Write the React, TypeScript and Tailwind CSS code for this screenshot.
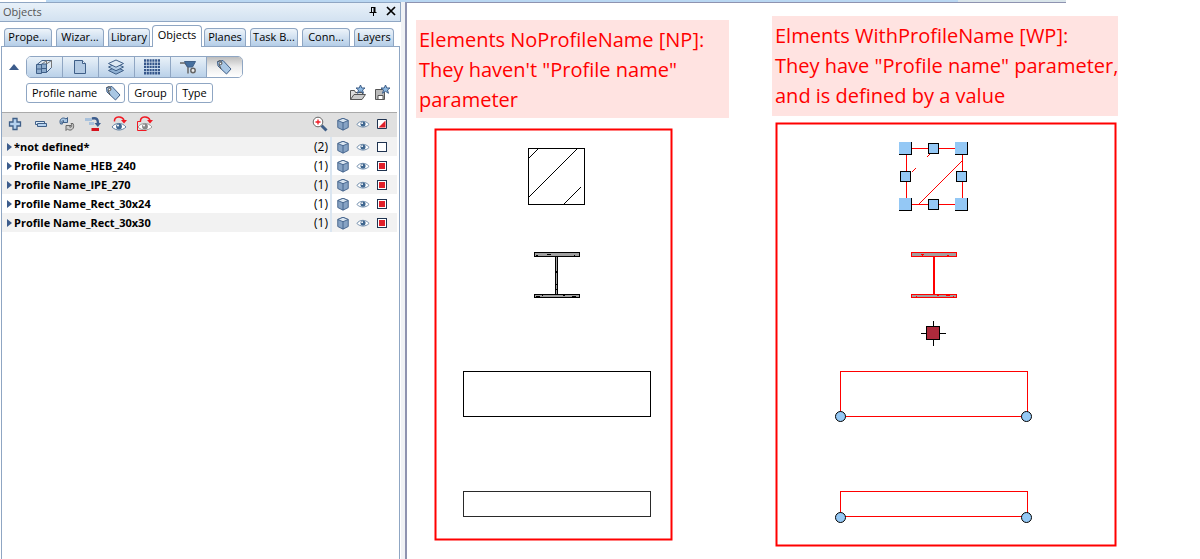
import { useState, type ReactNode } from 'react';

const tabs = [
  { label: 'Prope...', width: 'w-12' },
  { label: 'Wizar...', width: 'w-12' },
  { label: 'Library', width: 'w-[42px]' },
  { label: 'Objects', width: 'w-[50px]' },
  { label: 'Planes', width: 'w-[42px]' },
  { label: 'Task B...', width: 'w-12' },
  { label: 'Conn...', width: 'w-12' },
  { label: 'Layers', width: 'w-10' },
];

const groups = [
  { name: '*not defined*', count: 2, selected: false },
  { name: 'Profile Name_HEB_240', count: 1, selected: true },
  { name: 'Profile Name_IPE_270', count: 1, selected: true },
  { name: 'Profile Name_Rect_30x24', count: 1, selected: true },
  { name: 'Profile Name_Rect_30x30', count: 1, selected: true },
];

function Icon({ children, className = 'size-4' }: { children: ReactNode; className?: string }) {
  return (
    <svg viewBox="0 0 16 16" className={`shrink-0 ${className}`} fill="none" stroke="#3f5f88" aria-hidden="true">
      {children}
    </svg>
  );
}

function WallIcon() {
  return (
    <Icon>
      <path d="M.5 6L6 1.500h9.500v7l-5 5" fill="#dfe9f3" />
      <path d="M5.500 5.500l5-4M10.500 5l5-3.500M10.500 1.500v8M15.500 1.500v7" stroke="#777" />
      <path d="M.5 5.500h5v9h-5zM5.500 5h5v8.500h-5z" fill="#8eaccd" />
      <path d="M.5 10h5M5.500 9.500h5" />
    </Icon>
  );
}

function PageIcon() {
  return (
    <Icon>
      <path d="M2.500 1.500h8l3 3v10h-11z" fill="#b3cae3" />
      <path d="M10.500 1.500v3h3" fill="#e8f0f8" />
    </Icon>
  );
}

function LayersIcon() {
  return (
    <Icon>
      <path d="M.5 11.500l7.500-3.500 7.500 3.500L8 15.200z" fill="#8fb0d2" />
      <path d="M.5 8l7.500-3.500L15.500 8 8 11.700z" fill="#b3cde6" />
      <path d="M.5 4.500L8 1l7.500 3.500L8 8.200z" fill="#dde9f4" />
    </Icon>
  );
}

function GridIcon() {
  return (
    <Icon>
      <path
        d="M0 1.500h16M0 4.700h16M0 7.900h16M0 11.100h16M0 14.300h16"
        stroke="#34558a"
        strokeWidth="2.400"
        strokeDasharray="2.100 .680"
      />
    </Icon>
  );
}

function BarrowIcon() {
  return (
    <Icon>
      <path d="M0 4h5M5 4l3 4v6.500" stroke="#666" strokeWidth="1.500" />
      <path d="M4.500 2.500h11l-3 5.500h-5z" fill="#46709f" />
      <circle cx="13" cy="11.500" r="2.200" stroke="#666" strokeWidth="1.500" fill="#eee" />
    </Icon>
  );
}

function TagIcon() {
  return (
    <Icon>
      <path d="M1.500 2.500l5.500-1 8 8.500-4.500 5L2 7z" fill="#a9c7e4" />
      <path d="M3 5l2 5M2 3c1-3 5-1 3.500 2.500" stroke="#555" />
      <circle cx="4.500" cy="4.500" r="1.200" fill="#fff" stroke="#555" />
    </Icon>
  );
}

function FolderStarIcon() {
  return (
    <Icon>
      <path d="M.5 14.500v-9h4l1 2h7v2" fill="#ddd" stroke="#555" />
      <path d="M.5 14.500l3.500-5h11.500l-3.500 5z" fill="#ccc" stroke="#555" />
      <path d="M10.500 0l1.300 3h3.200l-2.500 2 1 3.300-3-2-3 2 1-3.300L6 3h3.200z" fill="#8fbae3" />
    </Icon>
  );
}

function SaveStarIcon() {
  return (
    <Icon>
      <path d="M.5 4.500h9v10h-9z" fill="#bbb" stroke="#555" />
      <path d="M3 10.500h5v4H3z" fill="#fff" stroke="#555" />
      <path d="M10.500 0l1.300 3h3.200l-2.500 2 1 3.300-3-2-3 2 1-3.300L6 3h3.200z" fill="#8fbae3" />
    </Icon>
  );
}

function PlusIcon() {
  return (
    <Icon>
      <path d="M6 2.500h4V6h3.500v4H10v3.500H6V10H2.500V6H6z" fill="#b5d1ee" strokeWidth="1.300" />
    </Icon>
  );
}

function MinusIcon() {
  return (
    <Icon>
      <path d="M2.500 5.500h9v3h-9z" fill="#dce9f5" />
      <path d="M4.500 7.500h9v3h-9z" fill="#b5d1ee" />
    </Icon>
  );
}

function RefreshIcon() {
  return (
    <Icon>
      <path d="M1.500 8C-.5 3 4 .5 7 3l1.500-1.500v5h-5L5 5C3.500 4 2 5.500 3.500 8z" fill="#a9c7e4" />
      <path d="M14 7.500c2.500 5-2.500 8.500-5.500 5.500L7 14.500v-5h5L10.500 11c2 1 3-1 1.500-3.500z" fill="#ccc" stroke="#666" />
    </Icon>
  );
}

function MoveIcon() {
  return (
    <Icon>
      <path d="M0 3.500h7M4 7.500h5" stroke="#a8c1dc" strokeWidth="3" />
      <path d="M7 2.500c5-1 6 1 6 5" stroke="#3c5c8c" strokeWidth="2.500" />
      <path d="M9.500 7h6.500l-3.200 4z" fill="#3c5c8c" stroke="none" />
      <path d="M6.500 12h7.500v3H6.500z" fill="#d5101c" stroke="none" />
    </Icon>
  );
}

function EyeShapes({ color = '#3f668f' }: { color?: string }) {
  return (
    <>
      <path d="M1 8.500C4 4 11 3.500 15 8.500C11 12.500 5 12.500 1 8.500z" fill="#fff" stroke={color} strokeWidth=".8" />
      <circle cx="8" cy="8" r="2.900" fill={color} stroke="none" />
      <circle cx="7" cy="7" r="1" fill="#fff" stroke="none" />
    </>
  );
}

function EyeRotateIcon({ boxed = false }: { boxed?: boolean }) {
  return (
    <Icon>
      <g transform="translate(0 2.500)">
        <EyeShapes color={boxed ? '#888' : '#3f668f'} />
      </g>
      {boxed && <path d="M4 5.500H.5v9h9" stroke="#f11923" />}
      <path d="M3.500 5.500C3 0 11-.5 13 4" stroke="#f11923" strokeWidth="1.500" />
      <path d="M10 4h6l-3 3.500z" fill="#f11923" stroke="none" />
    </Icon>
  );
}

function EyeIcon() {
  return (
    <Icon className="size-3.5">
      <EyeShapes />
    </Icon>
  );
}

function CubeIcon() {
  return (
    <Icon className="size-3.5">
      <path d="M2 4l6-2.500L14 4v8l-6 3-6-3z" fill="#87a3c4" />
      <path d="M2 4l6 2.500L14 4 8 1.500z" fill="#d9e5f0" />
      <path d="M8 6.500V15" />
    </Icon>
  );
}

function ZoomIcon() {
  return (
    <Icon>
      <path d="M9.500 9.500l5 5" strokeWidth="3" />
      <circle cx="6" cy="6" r="4.800" fill="#fff" stroke="#666" />
      <path d="M3.500 6h5M6 3.500v5" stroke="#f11923" strokeWidth="1.300" />
    </Icon>
  );
}

function HalfBoxIcon() {
  return (
    <svg viewBox="0 0 10 10" className="size-2.5" aria-hidden="true">
      <path d="M.5.500h9v9h-9z" fill="#fff" stroke="#1f3350" />
      <path d="M8.500 1.500v7h-7z" fill="#e0202a" />
    </svg>
  );
}

const filters = [
  { label: 'Structure', icon: <WallIcon /> },
  { label: 'Stories', icon: <PageIcon /> },
  { label: 'Layers', icon: <LayersIcon /> },
  { label: 'Materials', icon: <GridIcon /> },
  { label: 'Trades', icon: <BarrowIcon /> },
  { label: 'Attributes', icon: <TagIcon /> },
];

const actions = [
  { label: 'Expand all', icon: <PlusIcon /> },
  { label: 'Collapse all', icon: <MinusIcon /> },
  { label: 'Refresh', icon: <RefreshIcon /> },
  { label: 'Reassign', icon: <MoveIcon /> },
  { label: 'Invert visibility', icon: <EyeRotateIcon /> },
  { label: 'Invert selection', icon: <EyeRotateIcon boxed /> },
];

function ObjectsPanel() {
  const [active, setActive] = useState('Objects');
  const [filter, setFilter] = useState('Attributes');
  const [rows, setRows] = useState(groups);

  const toggle = (name: string) =>
    setRows(rows.map((r) => (r.name === name ? { ...r, selected: !r.selected } : r)));

  return (
    <aside className="flex w-[401px] shrink-0 flex-col text-[11px] leading-4">
      <header className="flex h-5 items-center justify-between border-y border-r border-[#8fa6c3] bg-linear-to-b from-[#e8f1f9] to-[#d3e2f1] px-[3px] text-[#555]">
        <h1>Objects</h1>
        <div className="flex gap-1.5 pb-0.5">
          <button aria-label="Pin panel">
            <svg viewBox="0 0 12 12" className="size-3" fill="none" stroke="#000" aria-hidden="true">
              <path d="M4.500 2v5M4 2.500h4M2.500 7.500h7M6.500 7v4" />
              <path d="M7.500 2v5" strokeWidth="2" />
            </svg>
          </button>
          <button aria-label="Close panel">
            <svg viewBox="0 0 12 12" className="size-3" stroke="#000" strokeWidth="1.700" aria-hidden="true">
              <path d="M2 2l8 8M10 2l-8 8" />
            </svg>
          </button>
        </div>
      </header>

      <nav className="flex h-6 items-end gap-1 pl-1" role="tablist">
        {tabs.map((tab) => (
          <button
            key={tab.label}
            role="tab"
            aria-selected={active === tab.label}
            onClick={() => setActive(tab.label)}
            className={`shrink-0 rounded-t border border-b-0 border-[#8fa6c3] text-center whitespace-nowrap text-black ${tab.width} ${
              active === tab.label
                ? 'relative -mx-0.5 -mb-px h-[22px] bg-white pb-1'
                : 'h-[18px] bg-linear-to-b from-[#eef4fa] to-[#b4cde7] pb-0.5'
            }`}
          >
            {tab.label}
          </button>
        ))}
      </nav>

      <div className="mr-px ml-px flex flex-1 flex-col border border-b-0 border-[#8fa6c3]">
        <div className="flex h-[65px] pt-[9px]">
          <button className="ml-[7px] flex h-[22px] items-center" aria-label="Collapse filters">
            <svg viewBox="0 0 10 6" className="h-1.5 w-2.5" aria-hidden="true">
              <path d="M0 6l5-6 5 6z" fill="#3c5c8c" />
            </svg>
          </button>
          <div className="ml-[7px] flex flex-1 flex-col gap-[5px]">
            <div className="flex w-[217px] overflow-hidden rounded-[5px] border border-[#8fa6c3]">
              {filters.map((f) => (
                <button
                  key={f.label}
                  aria-label={f.label}
                  aria-pressed={filter === f.label}
                  onClick={() => setFilter(f.label)}
                  className={`flex h-5 flex-1 items-center justify-center border-l border-[#8fa6c3] pr-0.5 first:border-l-0 ${
                    filter === f.label
                      ? 'bg-linear-to-b from-[#bdbdbd] via-[#ececec] to-white'
                      : 'bg-linear-to-b from-[#e9f1f8] to-[#bad1e9]'
                  }`}
                >
                  {f.icon}
                </button>
              ))}
            </div>
            <div className="flex h-5 items-center gap-[3px] pr-2 text-black">
              <button className="flex h-5 w-[99px] items-center justify-between rounded-[3px] border border-[#8fa6c3] pr-[3px] pl-[5px] whitespace-nowrap">
                Profile name
                <TagIcon />
              </button>
              <button className="h-5 w-[45px] rounded-[3px] border border-[#8fa6c3]">Group</button>
              <button className="h-5 w-[37px] rounded-[3px] border border-[#8fa6c3]">Type</button>
              <button className="mr-1.5 ml-auto" aria-label="Open favourites">
                <FolderStarIcon />
              </button>
              <button aria-label="Save favourite">
                <SaveStarIcon />
              </button>
            </div>
          </div>
        </div>

        <div className="mr-0.5 flex h-[25px] items-center border-t border-[#aaa] bg-[#e0e0e0] pr-2.5 pb-0.5 pl-[5px]">
          <div className="flex gap-2.5">
            {actions.map((a) => (
              <button key={a.label} aria-label={a.label}>
                {a.icon}
              </button>
            ))}
          </div>
          <div className="ml-auto flex items-center">
            <button className="mr-2" aria-label="Zoom to selection">
              <ZoomIcon />
            </button>
            <button className="mr-1.5" aria-label="Show in 3D">
              <CubeIcon />
            </button>
            <button className="mr-[7px]" aria-label="Show all">
              <EyeIcon />
            </button>
            <button aria-label="Select all">
              <HalfBoxIcon />
            </button>
          </div>
        </div>

        <table className="mr-0.5 border-collapse text-black">
          <tbody>
            {rows.map((row) => (
              <tr key={row.name} className="h-[19px] odd:bg-[#f2f2f2]">
                <td className="p-0 pl-[5px]">
                  <button className="flex items-center gap-0.5 font-bold whitespace-nowrap">
                    <svg viewBox="0 0 5 8" className="h-2 w-[5px]" aria-hidden="true">
                      <path d="M0 0l5 4-5 4z" fill="#3c5c8c" />
                    </svg>
                    {row.name}
                  </button>
                </td>
                <td className="w-10 border-r-2 border-[#dbe6f1] p-0 pr-0.5 text-right text-xs">({row.count})</td>
                <td className="w-[66px] p-0">
                  <div className="flex items-center pl-1">
                    <button className="mr-1.5" aria-label={`Show ${row.name} in 3D`}>
                      <CubeIcon />
                    </button>
                    <button className="mr-[7px]" aria-label={`Show ${row.name}`}>
                      <EyeIcon />
                    </button>
                    <input
                      type="checkbox"
                      aria-label={`Select ${row.name}`}
                      checked={row.selected}
                      onChange={() => toggle(row.name)}
                      className="size-2.5 appearance-none border border-[#1f3350] bg-white checked:bg-[#e0202a] checked:shadow-[inset_0_0_0_1px_white]"
                    />
                  </div>
                </td>
              </tr>
            ))}
          </tbody>
        </table>
      </div>
    </aside>
  );
}

function Frame1Drawing() {
  return (
    <svg viewBox="434 128 239 413" className="ml-[18px] h-[413px] w-[239px]" fill="none" stroke="#000">
      <rect x="435.500" y="129.500" width="236" height="410" stroke="#ff0000" strokeWidth="2" />
      <g shapeRendering="crispEdges">
        <rect x="528.500" y="148.500" width="56" height="56" />
        <path d="M528.500 158.500l10-10M528.500 197.500l49-49M563.500 204.500l17-17" />
        <path d="M534.500 252.500h45v4h-45zM534.500 294.500h45v3h-45zM555.500 256.500h2v38h-2z" fill="#a0a0a0" />
        <path d="M547 254.500h4M536 255.500h2M574 255.500h1M536 296.500h4M542 295.500h1M563 295.500h2M572 296.500h4M556.500 271v2M556.500 284v1M556.500 289v1" />
        <rect x="463.500" y="371.500" width="187" height="45" />
        <rect x="463.500" y="491.500" width="187" height="25" stroke="#2a2a2a" />
      </g>
    </svg>
  );
}

const cornerHandles = [[899, 142], [955, 142], [899, 198], [955, 198]];
const sideHandles = [[928, 143], [900, 171], [956, 171], [928, 199]];
const nodeHandles = [[840.5, 416.5], [1026.5, 416.5], [840.5, 517.5], [1026.5, 517.5]];

function Frame2Drawing() {
  return (
    <svg viewBox="775 122 342 425" className="ml-[3px] h-[425px] w-[342px]" fill="none" stroke="#ff0000">
      <rect x="776.500" y="123.500" width="339" height="422" strokeWidth="2" />
      <g shapeRendering="crispEdges">
        <rect x="906.500" y="148.500" width="56" height="56" />
        <path d="M918.500 204.500l44-44" stroke="#ff0000" />
        <path d="M926.500 157.500l4-4M911.500 172.500l4-4" />
        <path d="M911.500 252.500h45v4h-45zM911.500 294.500h45v3h-45z" fill="#a0a0a0" />
        <path d="M934 257v37" strokeWidth="2" />
        <path d="M921 254.500h3M922.500 254v2M947 255.500h2M916 296.500h1M937 295.500h2M946 295.500h4M953 296.500h1" />
        <rect x="840.500" y="371.500" width="187" height="45" />
        <rect x="840.500" y="491.500" width="187" height="25" />
        <path d="M921 333.500h25M933.500 321v25" stroke="#000" />
        <rect x="926.500" y="326.500" width="13" height="13" fill="#ad2a3c" stroke="#000" />
        {cornerHandles.map(([x, y]) => (
          <g key={`${x}-${y}`}>
            <rect x={x} y={y} width="13" height="13" fill="#94c8f5" stroke="none" />
            <path d={`M${x + 12.5} ${y}v12.500H${x}`} stroke="#000" />
          </g>
        ))}
        {sideHandles.map(([x, y]) => (
          <rect key={`${x}-${y}`} x={x + 0.5} y={y + 0.5} width="10" height="10" fill="#94c8f5" stroke="#000" />
        ))}
      </g>
      {nodeHandles.map(([x, y]) => (
        <circle key={`${x}-${y}`} cx={x} cy={y} r="5" fill="#94c8f5" stroke="#000" />
      ))}
    </svg>
  );
}

export default function App() {
  return (
    <div className="flex min-h-screen flex-col bg-white font-['Open_Sans','Noto_Sans',sans-serif]">
      <div className="flex h-0.5">
        <div className="ml-[46px] flex-1 bg-[#b9d7f2]" />
        <div className="w-[108px] bg-[#d9e5ea]" />
        <div className="w-[134px]" />
      </div>
      <div className="flex flex-1">
        <ObjectsPanel />
        <div className="w-1 shrink-0 bg-[#f0f2f5]" />
        <main className="flex flex-1 flex-col border-l-2 border-[#8e93b0]">
          <div className="mr-[134px] h-px bg-[#8e93b0]" />
          <div className="flex items-start pl-[9px] text-xl leading-[30px] text-[#ff0000]">
            <section className="mt-[17px] mr-[43px] flex shrink-0 flex-col gap-2.5">
              <p className="h-[98px] w-[313px] bg-[#ffe3e1] pt-[5px] pl-[3px] whitespace-nowrap">
                Elements NoProfileName [NP]:
                <br />
                They haven't "Profile name"
                <br />
                parameter
              </p>
              <Frame1Drawing />
            </section>
            <section className="mt-[13px] flex shrink-0 flex-col gap-1.5">
              <p className="h-[100px] w-[346px] bg-[#ffe3e1] pt-[5px] pl-[3px] whitespace-nowrap">
                Elments WithProfileName [WP]:
                <br />
                They have "Profile name" parameter,
                <br />
                and is defined by a value
              </p>
              <Frame2Drawing />
            </section>
          </div>
        </main>
      </div>
    </div>
  );
}
